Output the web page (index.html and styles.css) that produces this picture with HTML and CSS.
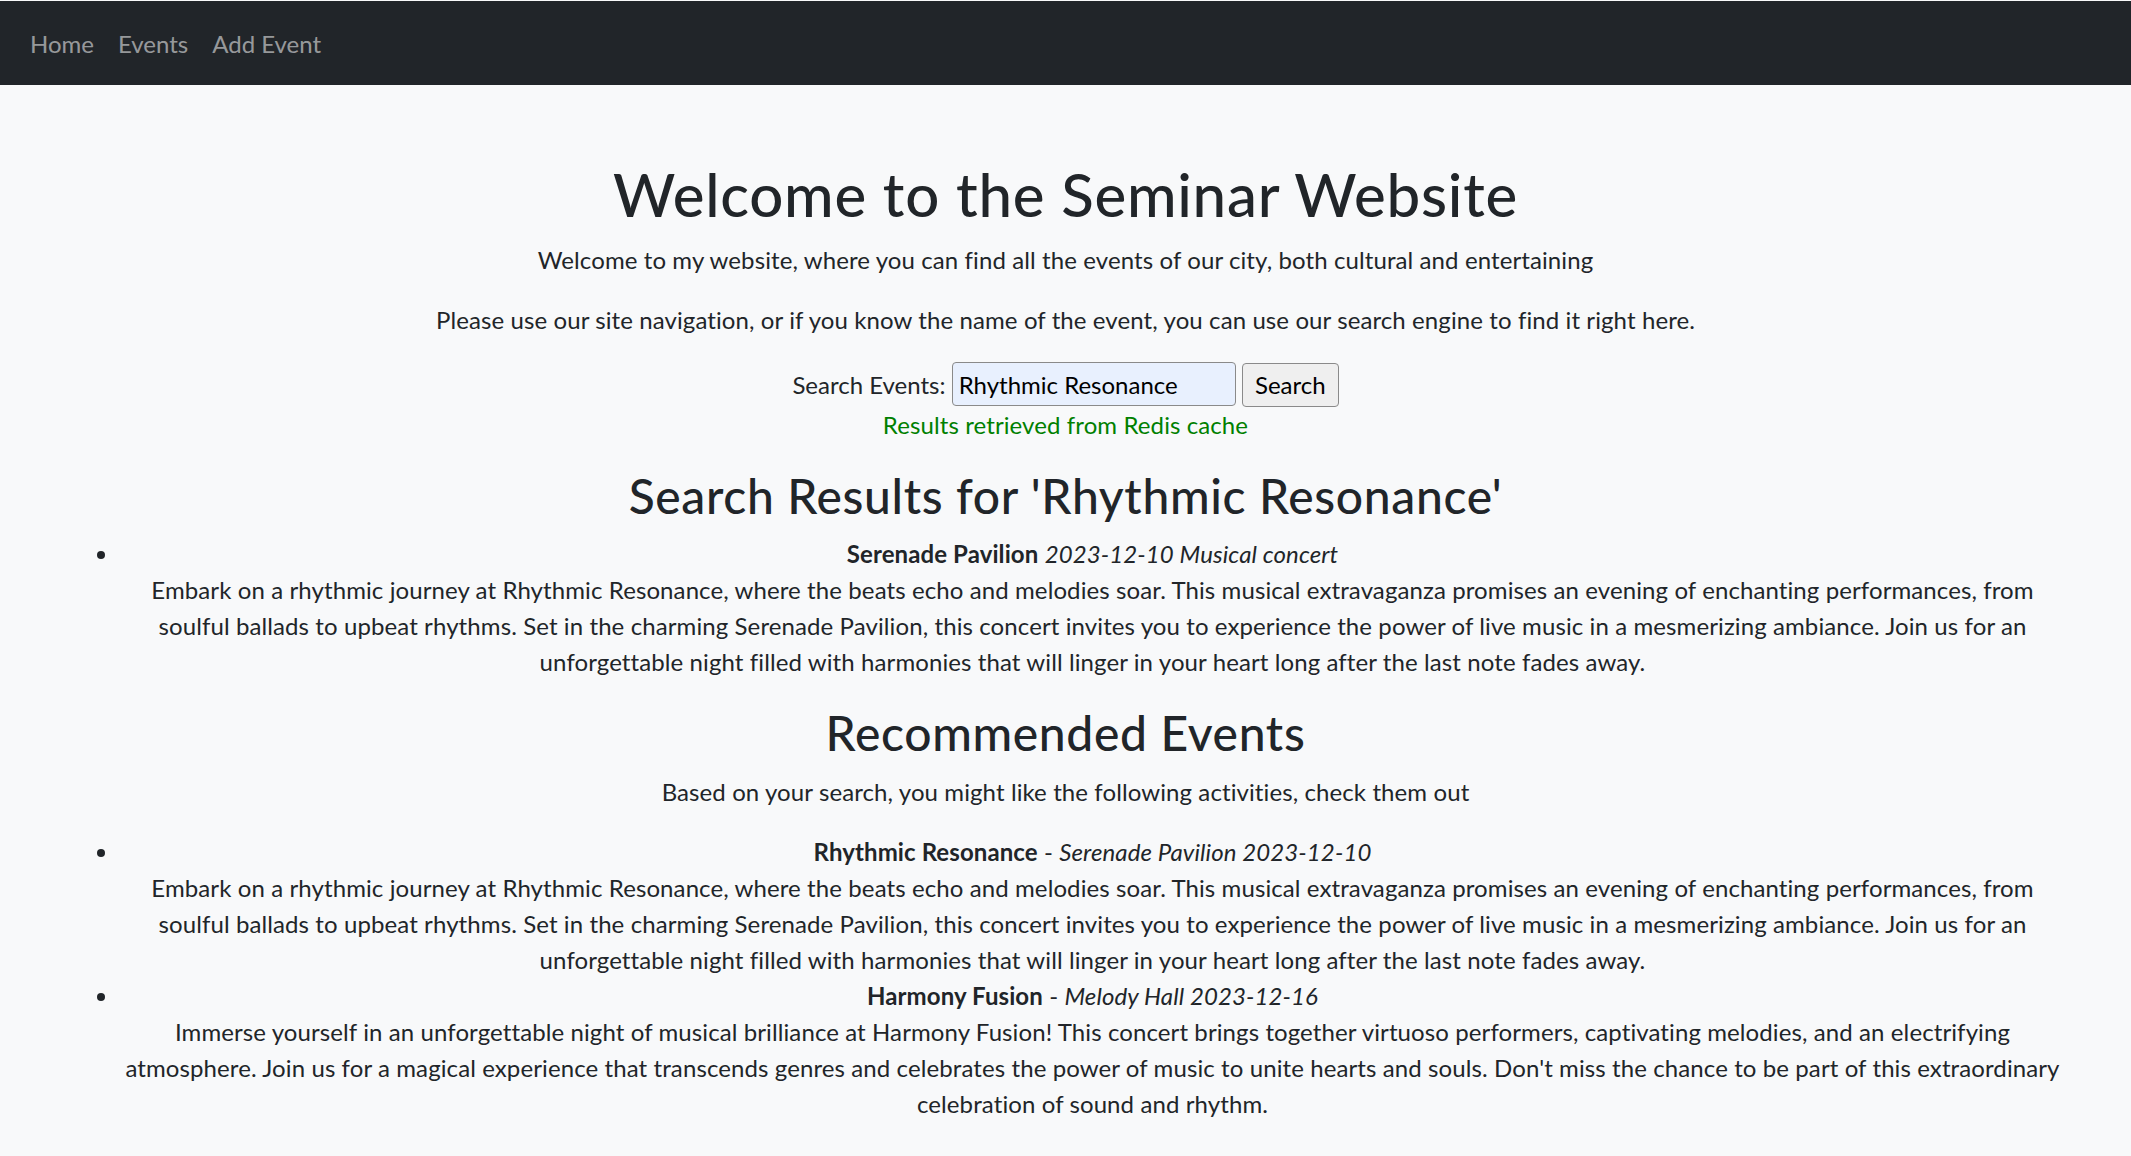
FILE: index.html
```html
<!DOCTYPE html>
<html lang="en">
<head>
<meta charset="utf-8">
<title>Seminar Website</title>
<link rel="stylesheet" href="styles.css">
</head>
<body>
<nav class="navbar">
  <div class="navbar-inner">
    <a class="nav-link" href="#">Home</a>
    <a class="nav-link" href="#">Events</a>
    <a class="nav-link" href="#">Add Event</a>
  </div>
</nav>
<main class="container">
  <h1 class="title">Welcome to the Seminar Website</h1>
  <p class="lead-text">Welcome to my website, where you can find all the events of our city, both cultural and entertaining</p>
  <p class="lead-text">Please use our site navigation, or if you know the name of the event, you can use our search engine to find it right here.</p>
  <form class="search-form">
    <label class="search-label" for="q">Search Events:</label>
    <input class="search-input" id="q" type="text" value="Rhythmic Resonance">
    <button class="search-btn" type="button">Search</button>
  </form>
  <p class="cache-note">Results retrieved from Redis cache</p>

  <h2 class="section-title">Search Results for 'Rhythmic Resonance'</h2>
  <ul class="event-list">
    <li class="event-item">
      <strong>Serenade Pavilion</strong> <em>2023-12-10 Musical concert</em>
      <p class="event-desc">Embark on a rhythmic journey at Rhythmic Resonance, where the beats echo and melodies soar. This musical extravaganza promises an evening of enchanting performances, from soulful ballads to upbeat rhythms. Set in the charming Serenade Pavilion, this concert invites you to experience the power of live music in a mesmerizing ambiance. Join us for an unforgettable night filled with harmonies that will linger in your heart long after the last note fades away.</p>
    </li>
  </ul>

  <h2 class="section-title">Recommended Events</h2>
  <p class="lead-text">Based on your search, you might like the following activities, check them out</p>
  <ul class="event-list">
    <li class="event-item">
      <strong>Rhythmic Resonance</strong> - <em>Serenade Pavilion 2023-12-10</em>
      <p class="event-desc">Embark on a rhythmic journey at Rhythmic Resonance, where the beats echo and melodies soar. This musical extravaganza promises an evening of enchanting performances, from soulful ballads to upbeat rhythms. Set in the charming Serenade Pavilion, this concert invites you to experience the power of live music in a mesmerizing ambiance. Join us for an unforgettable night filled with harmonies that will linger in your heart long after the last note fades away.</p>
    </li>
    <li class="event-item">
      <strong>Harmony Fusion</strong> - <em>Melody Hall 2023-12-16</em>
      <p class="event-desc">Immerse yourself in an unforgettable night of musical brilliance at Harmony Fusion! This concert brings together virtuoso performers, captivating melodies, and an electrifying atmosphere. Join us for a magical experience that transcends genres and celebrates the power of music to unite hearts and souls. Don't miss the chance to be part of this extraordinary celebration of sound and rhythm.</p>
    </li>
  </ul>
</main>
</body>
</html>
```

FILE: styles.css
```css
* { box-sizing: border-box; }

html, body {
  margin: 0;
  padding: 0;
}

body {
  font-family: "Segoe UI", Lato, "Liberation Sans", sans-serif;
  font-size: 24px;
  line-height: 36px;
  letter-spacing: 0.1px;
  color: #212529;
  background: #f8f9fa;
  border-top: 1px solid #f8f9fa;
  min-height: 1156px;
}

.navbar {
  background: #212529;
  padding: 13px 18px 11px;
}

.navbar-inner {
  display: flex;
  align-items: center;
}

.nav-link {
  color: rgba(255, 255, 255, 0.55);
  text-decoration: none;
  padding: 12px 12px;
  line-height: 36px;
  letter-spacing: 0;
}

.container {
  width: 100%;
  margin: 0;
  padding: 73px 66px 0;
  text-align: center;
}

.title {
  font-size: 60px;
  font-weight: 500;
  line-height: 72px;
  letter-spacing: 0.75px;
  margin: 0 0 12px;
}

.lead-text {
  margin: 0 0 24px;
}

.search-form {
  margin: 0;
}

.search-label {
  letter-spacing: 0;
}

.search-input {
  font: inherit;
  line-height: 36px;
  width: 284px;
  height: 44px;
  padding: 1px 6px;
  margin: 0;
  border: 1.5px solid #8a8a8a;
  border-radius: 4px;
  background: #e8f0fe;
  color: #000;
  vertical-align: baseline;
}

.search-btn {
  font: inherit;
  line-height: 36px;
  height: 44px;
  padding: 0 12px;
  margin: 0;
  border: 1.5px solid #8a8a8a;
  border-radius: 4px;
  background: #efefef;
  color: #000;
  vertical-align: baseline;
}

.cache-note {
  color: #008000;
  margin: 0 0 24px;
}

.section-title {
  font-size: 48px;
  font-weight: 500;
  line-height: 57.6px;
  letter-spacing: 0.65px;
  margin: 0 0 12px;
}

.event-list {
  margin: 0 0 24px;
  padding-left: 54px;
}

.event-desc {
  margin: 0;
}

strong { font-weight: 700; }
```
